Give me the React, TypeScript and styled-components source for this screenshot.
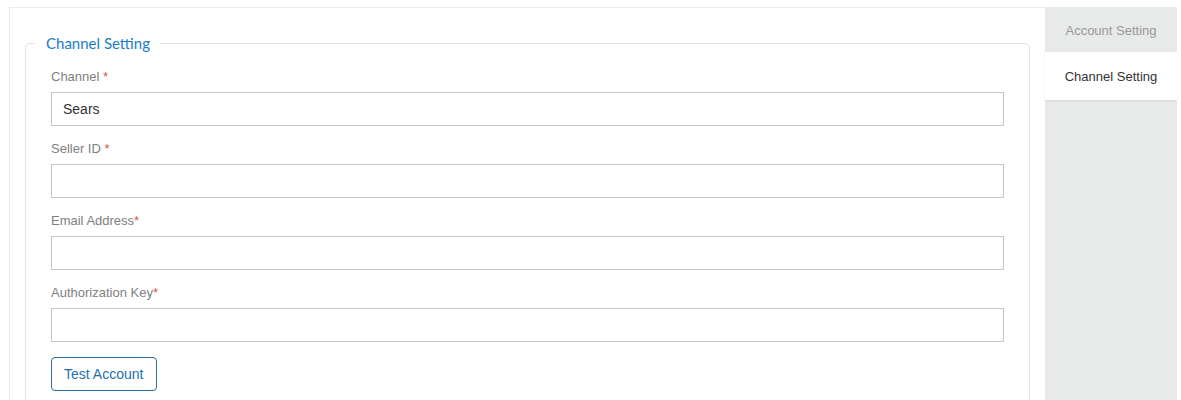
import { FC } from "react";
import styled, { createGlobalStyle } from "styled-components";

const GlobalStyle = createGlobalStyle`
  body {
    margin: 0;
    background: #fff;
    font-family: 'Liberation Sans', Arial, sans-serif;
  }
`;

const fields = [
    { label: 'Channel', gap: true, value: 'Sears' },
    { label: 'Seller ID', gap: true, value: '' },
    { label: 'Email Address', gap: false, value: '' },
    { label: 'Authorization Key', gap: false, value: '' },
];

const tabs = [
    { title: 'Account Setting', active: false },
    { title: 'Channel Setting', active: true },
];

const App: FC = () => {
    return (
        <>
            <GlobalStyle/>
            <SPage>
                <SMain>
                    <SFieldset>
                        <SLegend>Channel Setting</SLegend>
                        { fields.map((field) => (
                            <SField key={ field.label }>
                                <SLabel>
                                    { field.label }{ field.gap ? ' ' : '' }<SRequired>*</SRequired>
                                </SLabel>
                                <SInput defaultValue={ field.value }/>
                            </SField>
                        )) }
                        <SButton type='button'>Test Account</SButton>
                    </SFieldset>
                </SMain>
                <SSidebar>
                    { tabs.map((tab) => (
                        <STab key={ tab.title } $active={ tab.active }>{ tab.title }</STab>
                    )) }
                </SSidebar>
            </SPage>
        </>
    )
}

export default App;

const SPage = styled.div`
  display: flex;
  align-items: stretch;
  padding: 7px 0 0 9px;
  width: 1168px;
  height: 393px;
`;

const SMain = styled.div`
  flex: 0 0 1036px;
  box-sizing: border-box;
  padding: 25px 15px 0 15px;
  border-top: 1px solid #ebebeb;
  border-left: 1px solid #ebebeb;
`;

const SFieldset = styled.fieldset`
  margin: 0;
  padding: 15px 25px 20px 25px;
  border: 1px solid #e3e3e3;
  border-radius: 5px;
  min-width: 0;
`;

const SLegend = styled.legend`
  margin-left: -16px;
  padding: 0 10px 0 11px;
  font-family: Lato, 'Open Sans', sans-serif;
  font-size: 15px;
  line-height: 20px;
  color: #1b7dc4;
`;

const SField = styled.div`
  display: flex;
  flex-direction: column;
  margin-bottom: 14px;
`;

const SLabel = styled.label`
  font-size: 13px;
  line-height: 18px;
  color: #808080;
  margin-bottom: 6px;
`;

const SRequired = styled.span`
  color: #d9534f;
`;

const SInput = styled.input`
  box-sizing: border-box;
  width: 100%;
  height: 34px;
  padding: 0 11px;
  border: 1px solid #c6c6c6;
  border-radius: 0;
  outline: none;
  font-family: 'Liberation Sans', Arial, sans-serif;
  font-size: 14px;
  color: #333;
`;

const SButton = styled.button`
  margin-top: 1px;
  height: 34px;
  padding: 0 13px 0 12px;
  background: #fff;
  border: 1px solid #2a6ea6;
  border-radius: 4px;
  font-family: 'Liberation Sans', Arial, sans-serif;
  font-size: 14px;
  color: #1e6fb0;
  cursor: pointer;
`;

const SSidebar = styled.div`
  flex: 0 0 132px;
  display: flex;
  flex-direction: column;
  background: #e8e9e9;
`;

const STab = styled.div<{ $active: boolean }>`
  display: flex;
  align-items: center;
  justify-content: center;
  box-sizing: border-box;
  height: ${ ({ $active }) => $active ? '48px' : '45px' };
  padding-top: ${ ({ $active }) => $active ? '0' : '2px' };
  font-size: 13px;
  color: ${ ({ $active }) => $active ? '#333' : '#999' };
  background: ${ ({ $active }) => $active ? '#fff' : 'transparent' };
  box-shadow: ${ ({ $active }) => $active ? '0 1px 2px rgba(0, 0, 0, 0.08)' : 'none' };
`;
